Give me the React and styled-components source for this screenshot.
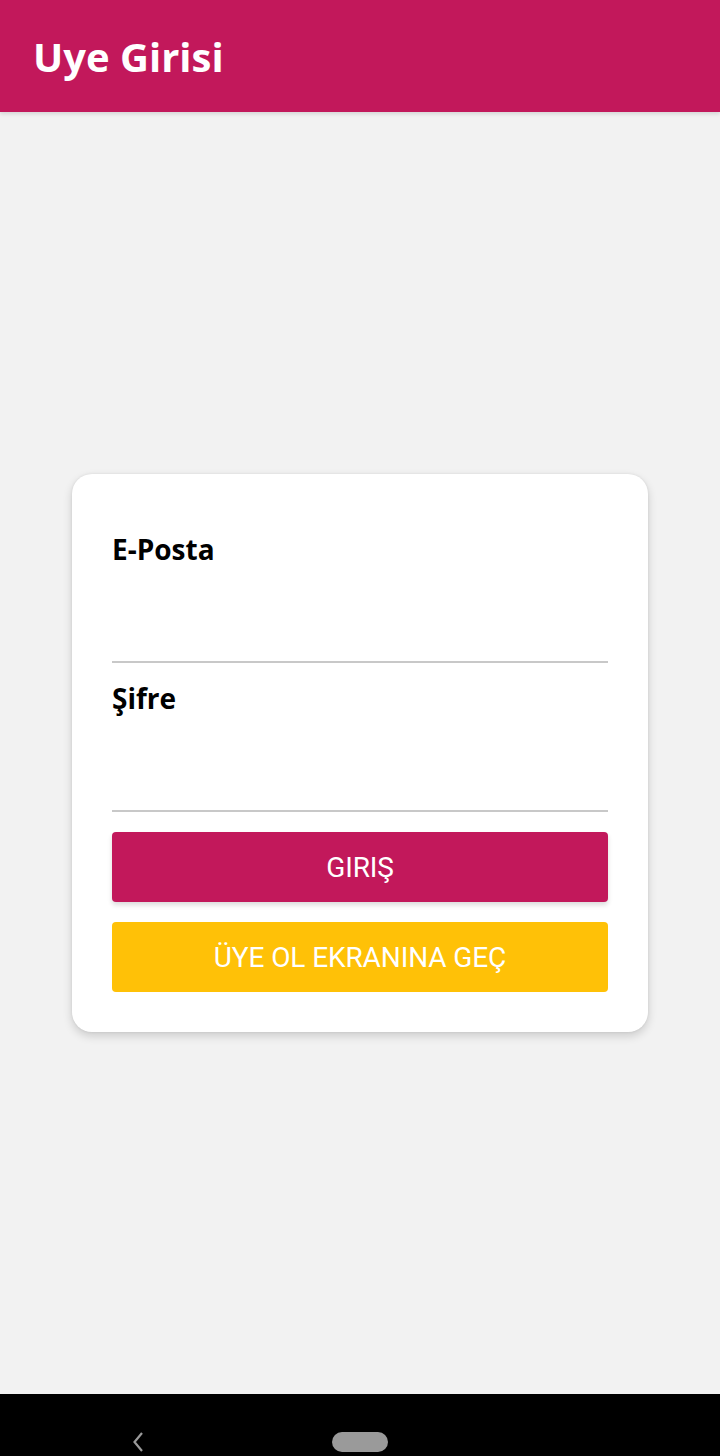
import React from "react";
import styled, {createGlobalStyle} from "styled-components";

const GlobalStyle = createGlobalStyle`
  html, body {
    margin: 0;
    padding: 0;
    background: #f2f2f2;
  }
  * {
    box-sizing: border-box;
  }
`;

const App = () => {
    return (
        <>
            <GlobalStyle/>
            <Screen>
                <Header>
                    <HeaderTitle>Uye Girisi</HeaderTitle>
                </Header>
                <Content>
                    <Card>
                        <Field>
                            <Label>E-Posta</Label>
                            <Input type="email"/>
                        </Field>
                        <Field>
                            <Label>Şifre</Label>
                            <Input type="password"/>
                        </Field>
                        <Buttons>
                            <Button color="#c2185b" raised>GIRIŞ</Button>
                            <Button color="#ffc107">ÜYE OL EKRANINA GEÇ</Button>
                        </Buttons>
                    </Card>
                </Content>
                <NavBar>
                    <BackIcon viewBox="0 0 12 20">
                        <path d="M10 1 L2.5 10 L10 19" fill="none" stroke="#9a9a9a" strokeWidth="2.2"/>
                    </BackIcon>
                    <HomePill/>
                </NavBar>
            </Screen>
        </>
    );
};

const Screen = styled.div`
  width: 720px;
  height: 1456px;
  display: flex;
  flex-direction: column;
  background: #f2f2f2;
`;

const Header = styled.header`
  height: 112px;
  flex-shrink: 0;
  display: flex;
  align-items: center;
  padding: 0 33px;
  background: #c2185b;
  box-shadow: 0 2px 4px rgba(0, 0, 0, 0.12);
  position: relative;
  z-index: 1;
`;

const HeaderTitle = styled.h1`
  margin: 0;
  font-family: "Open Sans", "Noto Sans", sans-serif;
  font-size: 40px;
  font-weight: bold;
  color: #ffffff;
`;

const Content = styled.main`
  flex: 1;
  display: flex;
  align-items: center;
  justify-content: center;
`;

const Card = styled.div`
  width: 576px;
  padding: 56px 40px 40px;
  background: #ffffff;
  border-radius: 20px;
  box-shadow: 0 4px 10px rgba(0, 0, 0, 0.16), 0 0 3px rgba(0, 0, 0, 0.08);
  display: flex;
  flex-direction: column;
`;

const Field = styled.div`
  display: flex;
  flex-direction: column;
  & + & {
    margin-top: 16px;
  }
`;

const Label = styled.label`
  font-family: "Open Sans", "Noto Sans", sans-serif;
  font-size: 28px;
  font-weight: bold;
  line-height: 38px;
  color: #000000;
`;

const Input = styled.input`
  height: 95px;
  border: none;
  border-bottom: 2px solid #c8c8c8;
  background: transparent;
  outline: none;
  padding: 0;
  font-family: "Open Sans", sans-serif;
  font-size: 28px;
`;

const Buttons = styled.div`
  display: flex;
  flex-direction: column;
  gap: 20px;
  margin-top: 20px;
`;

const Button = styled.button`
  height: 70px;
  border: none;
  border-radius: 4px;
  background: ${(p) => p.color};
  color: #ffffff;
  font-family: Roboto, "Liberation Sans", sans-serif;
  font-size: 28px;
  font-weight: 400;
  letter-spacing: -0.1px;
  box-shadow: ${(p) => (p.raised ? "0 3px 5px rgba(0, 0, 0, 0.14)" : "none")};
`;

const NavBar = styled.nav`
  height: 62px;
  flex-shrink: 0;
  background: #000000;
  display: flex;
  align-items: flex-end;
  padding: 0 0 4px 132px;
`;

const BackIcon = styled.svg`
  width: 12px;
  height: 20px;
`;

const HomePill = styled.div`
  width: 56px;
  height: 20px;
  margin-left: 188px;
  border-radius: 10px;
  background: #9a9a9a;
`;

export default App;
